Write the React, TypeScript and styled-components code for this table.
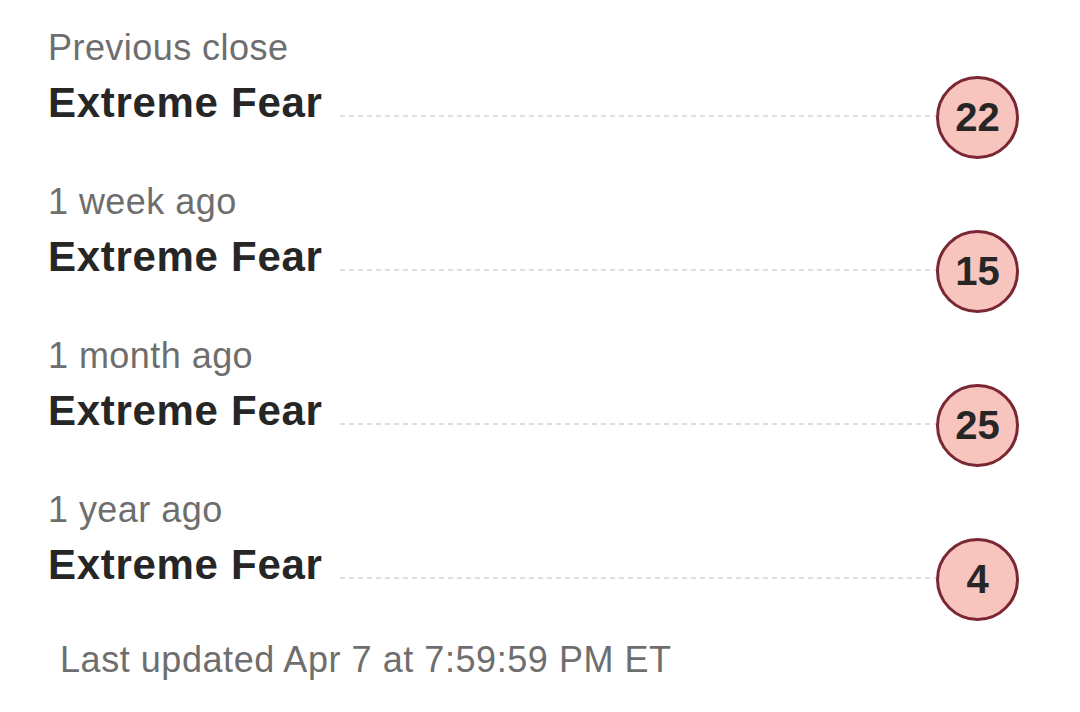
import React from "react";
import styled, { createGlobalStyle } from "styled-components";

const Global = createGlobalStyle`
  html, body { margin: 0; padding: 0; background: #ffffff; }
  body { font-family: "Liberation Sans", Arial, Helvetica, sans-serif; }
`;

const Panel = styled.section`
  width: 1080px;
  box-sizing: border-box;
  padding: 28px 61px 0 48px;
  display: flex;
  flex-direction: column;
  gap: 23px;
`;

const Row = styled.div`
  display: flex;
  flex-direction: column;
`;

const Label = styled.div`
  font-size: 36px;
  line-height: 40px;
  letter-spacing: 0.45px;
  color: #6e6e6e;
  margin-bottom: 8px;
`;

const ValueRow = styled.div`
  display: flex;
  align-items: flex-start;
  height: 83px;
`;

const Value = styled.div`
  font-size: 42px;
  line-height: 42px;
  letter-spacing: 0.7px;
  font-weight: 700;
  color: #262626;
  margin-top: 6px;
  white-space: nowrap;
`;

const Leader = styled.div`
  flex: 1;
  height: 2px;
  margin: 39px 0 0 17px;
  background: repeating-linear-gradient(
    to right,
    #dedede 0,
    #dedede 5px,
    transparent 5px,
    transparent 9px
  );
`;

const Badge = styled.div`
  width: 83px;
  height: 83px;
  box-sizing: border-box;
  border-radius: 50%;
  border: 3px solid #7b2633;
  background: #f7c4be;
  display: flex;
  align-items: center;
  justify-content: center;
  font-size: 40px;
  font-weight: 700;
  color: #262626;
  flex-shrink: 0;
`;

const Footer = styled.div`
  font-size: 36px;
  line-height: 40px;
  letter-spacing: 0.55px;
  color: #6e6e6e;
  padding-left: 12px;
  margin-top: -4px;
`;

const rows = [
  { label: "Previous close", value: "Extreme Fear", score: 22 },
  { label: "1 week ago", value: "Extreme Fear", score: 15 },
  { label: "1 month ago", value: "Extreme Fear", score: 25 },
  { label: "1 year ago", value: "Extreme Fear", score: 4 },
];

export default function App() {
  return (
    <>
      <Global />
      <Panel>
        {rows.map((r) => (
          <Row key={r.label}>
            <Label>{r.label}</Label>
            <ValueRow>
              <Value>{r.value}</Value>
              <Leader />
              <Badge>{r.score}</Badge>
            </ValueRow>
          </Row>
        ))}
        <Footer>Last updated Apr 7 at 7:59:59 PM ET</Footer>
      </Panel>
    </>
  );
}
